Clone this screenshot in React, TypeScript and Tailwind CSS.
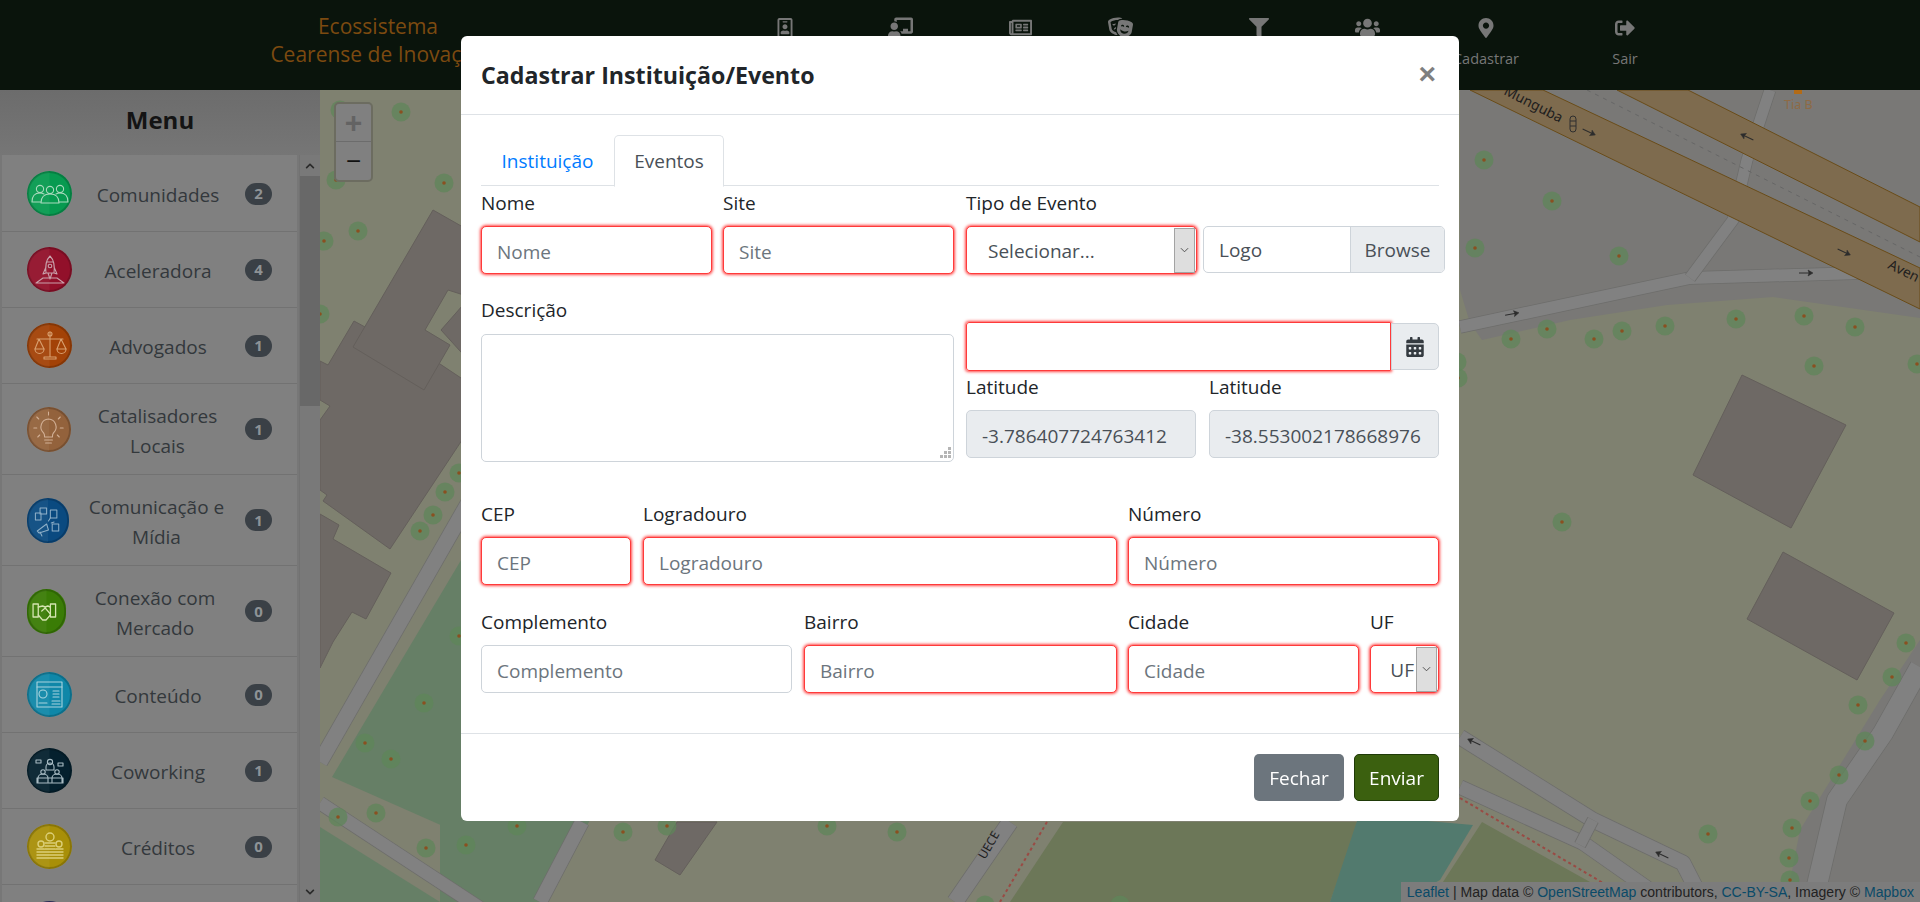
import React from "react";
import { FaRegIdBadge, FaChalkboardTeacher, FaRegNewspaper, FaTheaterMasks, FaFilter, FaUsers, FaMapMarkerAlt, FaSignOutAlt, FaCalendarAlt, FaChevronUp, FaChevronDown } from "react-icons/fa";

const stroke = { fill: "none", stroke: "#b9c4bd", strokeWidth: 1.1, strokeLinecap: "round" as const, strokeLinejoin: "round" as const };

function IconPeople() {
  return (
    <g {...stroke} stroke="#a9d9bd">
      <circle cx="13" cy="18" r="3.6" /><circle cx="23" cy="19" r="3.6" /><circle cx="33" cy="18" r="3.6" />
      <path d="M5 31c0-6 3-9 8-9 2 0 3 .5 4 1M41 31c0-6-3-9-8-9-2 0-3 .5-4 1M14 32c0-6 3-9 9-9s9 3 9 9zM5 31h9M32 31h9" />
    </g>
  );
}
function IconRocket() {
  return (
    <g {...stroke} stroke="#c9a0aa">
      <path d="M23 9c4 4 5 9 4 17h-8c-1-8 0-13 4-17zM19 20l-3 7 3-1M27 20l3 7-3-1M21 26l2 6 2-6M9 36l7-5h14l7 5zM20 15h6" />
      <circle cx="23" cy="19" r="1.8" />
    </g>
  );
}
function IconScale() {
  return (
    <g {...stroke} stroke="#d8a070">
      <path d="M23 9v25M10 16h26M12 16l-4 10h9zM34 16l-4 10h9zM17 36h12v-2H17z" />
      <circle cx="23" cy="11" r="2" />
      <path d="M8 26a4.500 4.500 0 0 0 9 0M30 26a4.500 4.500 0 0 0 9 0" />
    </g>
  );
}
function IconBulb() {
  return (
    <g {...stroke} stroke="#d2b096">
      <path d="M22 12a8 8 0 0 1 5 14c-1 1-1 3-1 4h-8c0-1 0-3-1-4a8 8 0 0 1 5-14zM18 33h8M19 36h6M22 5v3M10 10l2 2M34 10l-2 2M7 21h3M37 21h-3M11 30l2-2M33 30l-2-2" />
    </g>
  );
}
function IconMedia() {
  return (
    <g {...stroke} stroke="#8fb0c8">
      <rect x="14" y="10" width="7" height="6" /><rect x="25" y="12" width="7" height="8" />
      <rect x="9" y="15" width="6" height="7" /><rect x="27" y="26" width="7" height="7" />
      <path d="M11 33l10-7 2 6-10 3zM14 34l2 4M23 23l2-3M26 25l3-1" />
    </g>
  );
}
function IconShake() {
  return (
    <g {...stroke} stroke="#d4e4b0" strokeWidth="1.5">
      <rect x="7" y="15" width="6" height="13" /><rect x="27" y="15" width="6" height="13" />
      <path d="M13 18l5-1 3 1 3-1 3 1M13 26l5 5 4 0 5-5M17 22l4-3 6 6" />
    </g>
  );
}
function IconContent() {
  return (
    <g {...stroke} stroke="#a9d4de">
      <rect x="10" y="10" width="25" height="25" />
      <path d="M10 15h25M26 19h6M26 22h6M26 25h6M25 29h8M25 32h8M12 31h8" />
      <circle cx="16" cy="22" r="4" />
    </g>
  );
}
function IconCowork() {
  return (
    <g {...stroke} stroke="#a9bcc4">
      <circle cx="23" cy="14" r="2.6" /><circle cx="16" cy="24" r="2.2" /><circle cx="30" cy="24" r="2.2" />
      <path d="M19 22h8v-3a4 4 0 0 0-8 0zM11 34v-4a5 4 0 0 1 10 0v4M25 34v-4a5 4 0 0 1 10 0v4M10 30h26v5H10zM9 12h5v3H9zM31 15h5v3h-5z" />
    </g>
  );
}
function IconCoins() {
  return (
    <g {...stroke} stroke="#dccf78" strokeWidth="1.4">
      <circle cx="23" cy="13" r="4" /><circle cx="14" cy="20" r="3" /><circle cx="32" cy="20" r="3" />
      <path d="M10 25h7M29 25h7M18 19h10M18 22h10M18 25h10M10 28h26M10 31h26M10 34h26" />
    </g>
  );
}

const items = [
  { label: ["Comunidades"], n: 2, bg: "bg-[#079a50]", w: "w-[45px]", icon: <IconPeople />, h: "h-[76px]" },
  { label: ["Aceleradora"], n: 4, bg: "bg-[#92102a]", w: "w-[45px]", icon: <IconRocket />, h: "h-[76px]" },
  { label: ["Advogados"], n: 1, bg: "bg-[#a34207]", w: "w-[45px]", icon: <IconScale />, h: "h-[76px]" },
  { label: ["Catalisadores", "Locais"], n: 1, bg: "bg-[#93623c]", w: "w-[44px]", icon: <IconBulb />, h: "h-[91px]" },
  { label: ["Comunicação e", "Mídia"], n: 1, bg: "bg-[#0a4a80]", w: "w-[42px]", icon: <IconMedia />, h: "h-[91px]" },
  { label: ["Conexão com", "Mercado"], n: 0, bg: "bg-[#3a7c06]", w: "w-[39px]", icon: <IconShake />, h: "h-[91px]" },
  { label: ["Conteúdo"], n: 0, bg: "bg-[#0f87a8]", w: "w-[45px]", icon: <IconContent />, h: "h-[76px]" },
  { label: ["Coworking"], n: 1, bg: "bg-[#04202e]", w: "w-[45px]", icon: <IconCowork />, h: "h-[76px]" },
  { label: ["Créditos"], n: 0, bg: "bg-[#a88f08]", w: "w-[45px]", icon: <IconCoins />, h: "h-[76px]" },
];

function MenuItem({ it }: { it: (typeof items)[number] }) {
  return (
    <div className={`flex items-center border-b border-[#727272] pl-[25px] pr-[25px] shrink-0 ${it.h}`}>
      <svg viewBox="0 0 45 45" preserveAspectRatio="none" className={`${it.w} h-[45px] rounded-full shrink-0 ${it.bg}`}>
        <circle cx="22.5" cy="22.5" r="21.5" fill="none" stroke="#000" strokeOpacity="0.18" strokeWidth="2" />
        <path d="M22.500 1a21.500 21.500 0 0 0 0 43z" fill="#fff" fillOpacity="0.05" />
        {it.icon}
      </svg>
      <div className="flex-1 min-w-0 text-center text-[#33383c] leading-[30px] pt-[3px]">
        {it.label.map((l) => (
          <div key={l}>{l}</div>
        ))}
      </div>
      <span className="ml-[1px] w-[27px] h-[22px] shrink-0 rounded-full bg-[#3a4046] text-[#8e9396] text-[15px] font-bold flex items-center justify-center leading-none">{it.n}</span>
    </div>
  );
}

function Sidebar() {
  return (
    <aside className="w-[320px] shrink-0 flex flex-col h-[812px] overflow-hidden bg-[#777777]">
      <div className="h-[65px] shrink-0 flex items-center justify-center bg-gradient-to-b from-[#6c6c6c] to-[#767676] text-[#141414] text-[24px] font-bold pb-[6px]">Menu</div>
      <div className="flex-1 flex min-h-0">
        <div className="ml-[2px] w-[295px] bg-[#808080] flex flex-col overflow-hidden pt-[1px]">
          {items.map((it) => (
            <MenuItem key={it.label[0]} it={it} />
          ))}
          <div className="pl-[25px] pt-[16px] shrink-0">
            <div className="w-[45px] h-[45px] rounded-full bg-[#2a2a55]" />
          </div>
        </div>
        <div className="ml-[2px] w-[21px] border-l border-[#727272] bg-[#797979] flex flex-col">
          <div className="h-[21px] flex items-center justify-center text-[#2a2a2a]"><FaChevronUp className="w-[10px] h-[10px]" /></div>
          <div className="h-[230px] bg-[#686868]" />
          <div className="flex-1" />
          <div className="h-[21px] flex items-center justify-center text-[#2a2a2a]"><FaChevronDown className="w-[10px] h-[10px]" /></div>
        </div>
      </div>
    </aside>
  );
}

const trees: [number, number][] = [
  [401,112],[444,183],[358,231],[324,241],[336,180],[340,110],[320,314],
  [459,473],[445,492],[433,515],[420,531],[459,636],[424,703],[365,743],[391,759],
  [338,817],[376,813],[426,848],[466,845],[517,826],[623,832],[667,826],[827,826],[897,832],[985,905],[1120,905],
  [1484,160],[1552,201],[1475,248],[1619,256],[1511,339],[1547,329],[1594,339],[1622,331],[1665,326],[1736,319],[1804,316],[1855,327],[1814,366],[1917,364],[1457,362],[1458,378],
  [1562,522],[1906,643],[1892,677],[1858,705],[1865,741],[1839,775],[1810,801],[1792,828],[1789,858],[1790,880],[1708,834],
];

function Arrow({ x, y, a }: { x: number; y: number; a: number }) {
  return (
    <g transform={`translate(${x} ${y}) rotate(${a})`} stroke="#2c2c2c" fill="#2c2c2c">
      <path d="M-7 0H4" strokeWidth="1" />
      <path d="M7 0L2-3L3 0L2 3z" strokeWidth="0.5" />
    </g>
  );
}

function Road({ d, w = 14 }: { d: string; w?: number }) {
  return (
    <>
      <path d={d} fill="none" stroke="#6d6d6b" strokeWidth={w + 1.5} strokeLinejoin="round" />
      <path d={d} fill="none" stroke="#818181" strokeWidth={w} strokeLinejoin="round" />
    </>
  );
}

function MapLayer() {
  return (
    <svg viewBox="320 90 1600 812" className="absolute inset-0 w-full h-full" preserveAspectRatio="none">
      <rect x="320" y="90" width="1600" height="812" fill="#7f8170" />
      <polygon points="470,545 332,777 470,838" fill="#667f66" />
      <polygon points="320,827 440,902 320,902" fill="#667f66" />
      <polygon points="440,820 590,820 545,902 440,902" fill="#667f66" />
      <polygon points="1063,822 1359,822 1330,902 1010,902" fill="#6c7758" />
      <polygon points="1359,815 1473,825 1440,880 1400,902 1330,902" fill="#527a6e" />
      <polygon points="1482,822 1590,882 1602,902 1430,902" fill="#6c7758" />
      <polygon points="1460,90 1920,90 1920,318 1773,297 1667,305 1570,320 1482,340 1470,323 1460,290" fill="#797876" />
      <polygon points="1920,640 1880,700 1800,830 1786,902 1920,902" fill="#797876" />
      <g fill="#6e6965" stroke="#645f5b" strokeWidth="1">
        <polygon points="320,361 328,365 354,321 365,327 440,364 470,384 470,428 390,549 323,501 327,495 320,490 320,420 330,406 320,400" />
        <polygon points="433,210 470,231 470,297 448,290 425,330 450,345 424,390 353,347" />
        <polygon points="441,330 470,297 470,362" />
        <polygon points="320,514 339,525 333,539 391,573 366,619 352,612 333,642 320,668" />
        <polygon points="677,822 717,822 680,875 655,860" />
        <polygon points="1742,375 1846,425 1791,528 1693,475" />
        <polygon points="1783,552 1894,613 1857,680 1747,619" />
      </g>
      <Road d="M470 500L320 762" w={15} />
      <Road d="M320 803L480 908" w={13} />
      <Road d="M582 822L540 902" w={14} />
      <Road d="M1010 822L955 902" w={16} />
      <Road d="M1460 737L1593 820L1683 863L1703 902" w={15} />
      <Road d="M1460 787L1583 843L1650 890" w={14} />
      <Road d="M1593 820L1580 845" w={11} />
      <Road d="M1920 667L1883 733L1837 800L1813 902" w={20} />
      <Road d="M1460 327L1690 278L1860 273" w={12} />
      <Road d="M1690 278L1733 220L1747 160L1770 90" w={11} />
      <path d="M1460 798L1603 883" stroke="#9a4a44" strokeWidth="2" strokeDasharray="3 3" fill="none" />
      <path d="M1047 822L1000 902" stroke="#9a4a44" strokeWidth="2" strokeDasharray="3 3" fill="none" />
      <polygon points="1470,90 1543,90 1920,268 1920,309" fill="#7e6b4e" stroke="#6a4c18" strokeWidth="1" />
      <polygon points="1617,90 1688,90 1920,207 1920,242" fill="#7e6b4e" stroke="#6a4c18" strokeWidth="1" />
      <path d="M1587 90L1920 257" stroke="#666" strokeWidth="1" strokeDasharray="4 5" fill="none" />
      {trees.map(([x, y]) => (
        <g key={`${x}-${y}`}>
          <circle cx={x} cy={y} r="9.500" fill="#5f855a" fillOpacity="0.75" />
          <circle cx={x} cy={y} r="1.800" fill="#8a5020" />
        </g>
      ))}
      <Arrow x={1589} y={132} a={25} />
      <Arrow x={1747} y={137} a={205} />
      <Arrow x={1844} y={252} a={25} />
      <Arrow x={1806} y={273} a={0} />
      <Arrow x={1512} y={314} a={-10} />
      <Arrow x={1474} y={742} a={205} />
      <Arrow x={1662} y={855} a={205} />
      <g fill="none" stroke="#2e2e2e" strokeWidth="1">
        <rect x="1570" y="116" width="6" height="16" rx="3" />
        <path d="M1570 121h6M1570 126h6" />
      </g>
      <rect x="1794" y="90" width="8" height="4" fill="#b36b16" />
      <g fontFamily="'Noto Sans',sans-serif" fontSize="14">
        <text x="1784" y="109" fill="#8e6a45" fontSize="12.5">Tia B</text>
        <text transform="translate(1503 94) rotate(27)" fill="#1e1e1e">Munguba</text>
        <text transform="translate(1887 268) rotate(26)" fill="#1e1e1e">Aven</text>
        <text transform="translate(985 860) rotate(-60)" fill="#1e1e1e" fontSize="12">UECE</text>
      </g>
    </svg>
  );
}

const nav = [
  { icon: <FaRegIdBadge />, label: "", cls: "ml-[207px]", size: "text-[20px]" },
  { icon: <FaChalkboardTeacher />, label: "", cls: "ml-[35px]", size: "text-[25px]" },
  { icon: <FaRegNewspaper />, label: "", cls: "ml-[40px]", size: "text-[23px]" },
  { icon: <FaTheaterMasks />, label: "", cls: "ml-[20px]", size: "text-[25px]" },
  { icon: <FaFilter />, label: "", cls: "ml-[59px]", size: "text-[20px]" },
  { icon: <FaUsers />, label: "", cls: "ml-[28px]", size: "text-[25px]" },
  { icon: <FaMapMarkerAlt />, label: "Cadastrar", cls: "ml-[39px]", size: "text-[20px]" },
  { icon: <FaSignOutAlt />, label: "Sair", cls: "ml-[59px]", size: "text-[20px]" },
];

function Header() {
  return (
    <header className="h-[90px] bg-[#0a140c] flex items-start shrink-0">
      <div className="ml-[218px] w-[320px] pt-[12px] text-center text-[#7c4a10] text-[21px] leading-[28px]">
        Ecossistema<br />Cearense de Inovação
      </div>
      {nav.map((n, i) => (
        <div key={i} className={`w-[80px] shrink-0 flex flex-col items-center pt-[15px] text-[#777777] ${n.cls}`}>
          <div className={`h-[25px] flex items-center justify-center ${n.size}`}>{n.icon}</div>
          <div className="text-[14.5px] leading-[20px] mt-[9px] h-[20px]">{n.label}</div>
        </div>
      ))}
    </header>
  );
}

const redCls = "border border-[#ff3a3a] shadow-[0_0_3px_1px_rgba(255,0,0,0.72)]";

function Field({ label, placeholder, cls, red = true }: { label: string; placeholder: string; cls: string; red?: boolean }) {
  return (
    <div className={`flex flex-col shrink-0 ${cls}`}>
      <label className="h-[30px] leading-[30px] mb-[8px] text-[#212529]">{label}</label>
      <input
        placeholder={placeholder}
        className={`w-full h-[48px] rounded-[5px] bg-white px-[15px] pt-[3px] outline-none placeholder:text-[#6c757d] ${red ? redCls : "border border-[#ced4da]"}`}
      />
    </div>
  );
}

function Spinner({ cls }: { cls: string }) {
  return (
    <div className={`flex items-center justify-center bg-[#dedede] border border-[#a3a3a3] shrink-0 ${cls}`}>
      <svg viewBox="0 0 10 6" className="w-[9px] h-[6px]" fill="none" stroke="#444" strokeWidth="1"><path d="M1 1l4 4 4-4" /></svg>
    </div>
  );
}

function Modal() {
  return (
    <div className="fixed left-[461px] top-[36px] w-[998px] h-[785px] bg-white rounded-[6px] flex flex-col text-[#212529]">
      <div className="h-[79px] shrink-0 border-b border-[#dee2e6] flex items-start justify-between px-[20px] pt-[21px]">
        <h5 className="text-[23.2px] leading-[37px] font-bold text-[#212529]">Cadastrar Instituição/Evento</h5>
        <span className="font-['Liberation_Sans',sans-serif] font-bold text-[30px] leading-[30px] text-[#7f7f7f] pt-[2px] mr-[3px]">×</span>
      </div>
      <div className="flex-1 px-[20px] pt-[20px] flex flex-col min-h-0">
        <div className="flex border-b border-[#dee2e6] h-[51px] shrink-0">
          <div className="w-[133px] h-[51px] flex items-center justify-center text-[#007bff]">Instituição</div>
          <div className="w-[110px] h-[52px] flex items-center justify-center text-[#495057] border border-[#dee2e6] border-b-white rounded-t-[5px] bg-white">Eventos</div>
        </div>
        <div className="flex mt-[2px]">
          <Field label="Nome" placeholder="Nome" cls="w-[231px]" />
          <Field label="Site" placeholder="Site" cls="w-[231px] ml-[11px]" />
          <div className="flex flex-col w-[231px] ml-[12px] shrink-0">
            <label className="h-[30px] leading-[30px] mb-[8px]">Tipo de Evento</label>
            <div className={`h-[48px] rounded-[5px] bg-white flex items-center pl-[21px] pr-[1px] ${redCls}`}>
              <span className="flex-1 text-[#495057] pt-[2px]">Selecionar...</span>
              <Spinner cls="w-[21px] h-[45px]" />
            </div>
          </div>
          <div className="flex w-[242px] ml-[6px] mt-[38px] h-[47px] border border-[#ced4da] rounded-[5px] overflow-hidden shrink-0">
            <div className="flex-1 flex items-center pl-[15px] text-[#495057] pt-[1px]">Logo</div>
            <div className="w-[94px] bg-[#e9ecef] border-l border-[#ced4da] flex items-center justify-center text-[#495057] pt-[1px]">Browse</div>
          </div>
        </div>
        <div className="flex mt-[21px]">
          <div className="w-[473px] flex flex-col shrink-0">
            <label className="h-[30px] leading-[30px] mb-[9px]">Descrição</label>
            <div className="relative h-[128px]">
              <textarea className="w-full h-[128px] border border-[#ced4da] rounded-[5px] outline-none resize-none block" />
              <svg viewBox="0 0 11 11" className="absolute right-[3px] bottom-[4px] w-[11px] h-[11px]" fill="#b5b5b5">
                <rect x="8" y="0" width="3" height="3" /><rect x="4" y="4" width="3" height="3" /><rect x="8" y="4" width="3" height="3" />
                <rect x="0" y="8" width="3" height="3" /><rect x="4" y="8" width="3" height="3" /><rect x="8" y="8" width="3" height="3" />
              </svg>
            </div>
          </div>
          <div className="w-[473px] ml-[12px] flex flex-col shrink-0 pt-[27px]">
            <div className="flex h-[49px]">
              <input className={`flex-1 min-w-0 rounded-l-[3px] outline-none ${redCls}`} />
              <div className="w-[48px] my-[1px] bg-[#e9ecef] border border-[#ced4da] rounded-r-[5px] flex items-center justify-center text-[#343a40] text-[20px]"><FaCalendarAlt /></div>
            </div>
            <div className="flex justify-between mt-[1px]">
              {["-3.786407724763412", "-38.553002178668976"].map((v) => (
                <div key={v} className="w-[230px] flex flex-col">
                  <label className="h-[30px] leading-[30px] mb-[8px]">Latitude</label>
                  <div className="h-[48px] rounded-[5px] bg-[#e9ecef] border border-[#ced4da] flex items-center pl-[15px] pt-[3px] text-[#495057] whitespace-nowrap overflow-hidden">{v}</div>
                </div>
              ))}
            </div>
          </div>
        </div>
        <div className="flex mt-[37px]">
          <Field label="CEP" placeholder="CEP" cls="w-[150px]" />
          <Field label="Logradouro" placeholder="Logradouro" cls="w-[474px] ml-[12px]" />
          <Field label="Número" placeholder="Número" cls="w-[311px] ml-[11px]" />
        </div>
        <div className="flex mt-[22px]">
          <Field label="Complemento" placeholder="Complemento" cls="w-[311px]" red={false} />
          <Field label="Bairro" placeholder="Bairro" cls="w-[313px] ml-[12px]" />
          <Field label="Cidade" placeholder="Cidade" cls="w-[231px] ml-[11px]" />
          <div className="flex flex-col w-[69px] ml-[11px] shrink-0">
            <label className="h-[30px] leading-[30px] mb-[8px]">UF</label>
            <div className={`h-[48px] rounded-[5px] bg-white flex items-center justify-end pr-[1px] ${redCls}`}>
              <span className="text-[#495057] mr-[2px] pt-[2px]">UF</span>
              <Spinner cls="w-[21px] h-[45px]" />
            </div>
          </div>
        </div>
      </div>
      <div className="h-[88px] shrink-0 border-t border-[#dee2e6] flex justify-end items-start pt-[20px] pr-[20px]">
        <button className="w-[90px] h-[47px] rounded-[5px] bg-[#6c757d] text-white pt-[1px]">Fechar</button>
        <button className="w-[85px] h-[47px] ml-[10px] rounded-[5px] bg-[#3b600f] border border-[#1f3a08] text-white pt-[1px]">Enviar</button>
      </div>
    </div>
  );
}

export default function App() {
  return (
    <div className="w-[1920px] h-[902px] overflow-hidden flex flex-col font-['Open_Sans',sans-serif] text-[19px] leading-[30px] relative">
      <Header />
      <div className="flex flex-1 min-h-0">
        <Sidebar />
        <main className="flex-1 relative">
          <MapLayer />
          <div className="absolute left-[14px] top-[12px] w-[39px] border-2 border-[#6c6c60] rounded-[5px] bg-[#808080] overflow-hidden flex flex-col">
            <div className="h-[38px] flex items-center justify-center text-[#636363] text-[30px] font-bold font-['Liberation_Sans',sans-serif] border-b border-[#6c6c6c]">+</div>
            <div className="h-[38px] flex items-center justify-center text-[#111] text-[26px] font-['Liberation_Sans',sans-serif]">−</div>
          </div>
          <div className="absolute right-0 bottom-0 h-[20px] bg-[#7c7c7c] px-[6px] text-[14.05px] leading-[20px] text-[#222] font-['Liberation_Sans',sans-serif] whitespace-nowrap">
            <span className="text-[#0a4a68]">Leaflet</span> | Map data © <span className="text-[#0a4a68]">OpenStreetMap</span> contributors, <span className="text-[#0a4a68]">CC-BY-SA</span>, Imagery © <span className="text-[#0a4a68]">Mapbox</span>
          </div>
        </main>
      </div>
      <Modal />
    </div>
  );
}
